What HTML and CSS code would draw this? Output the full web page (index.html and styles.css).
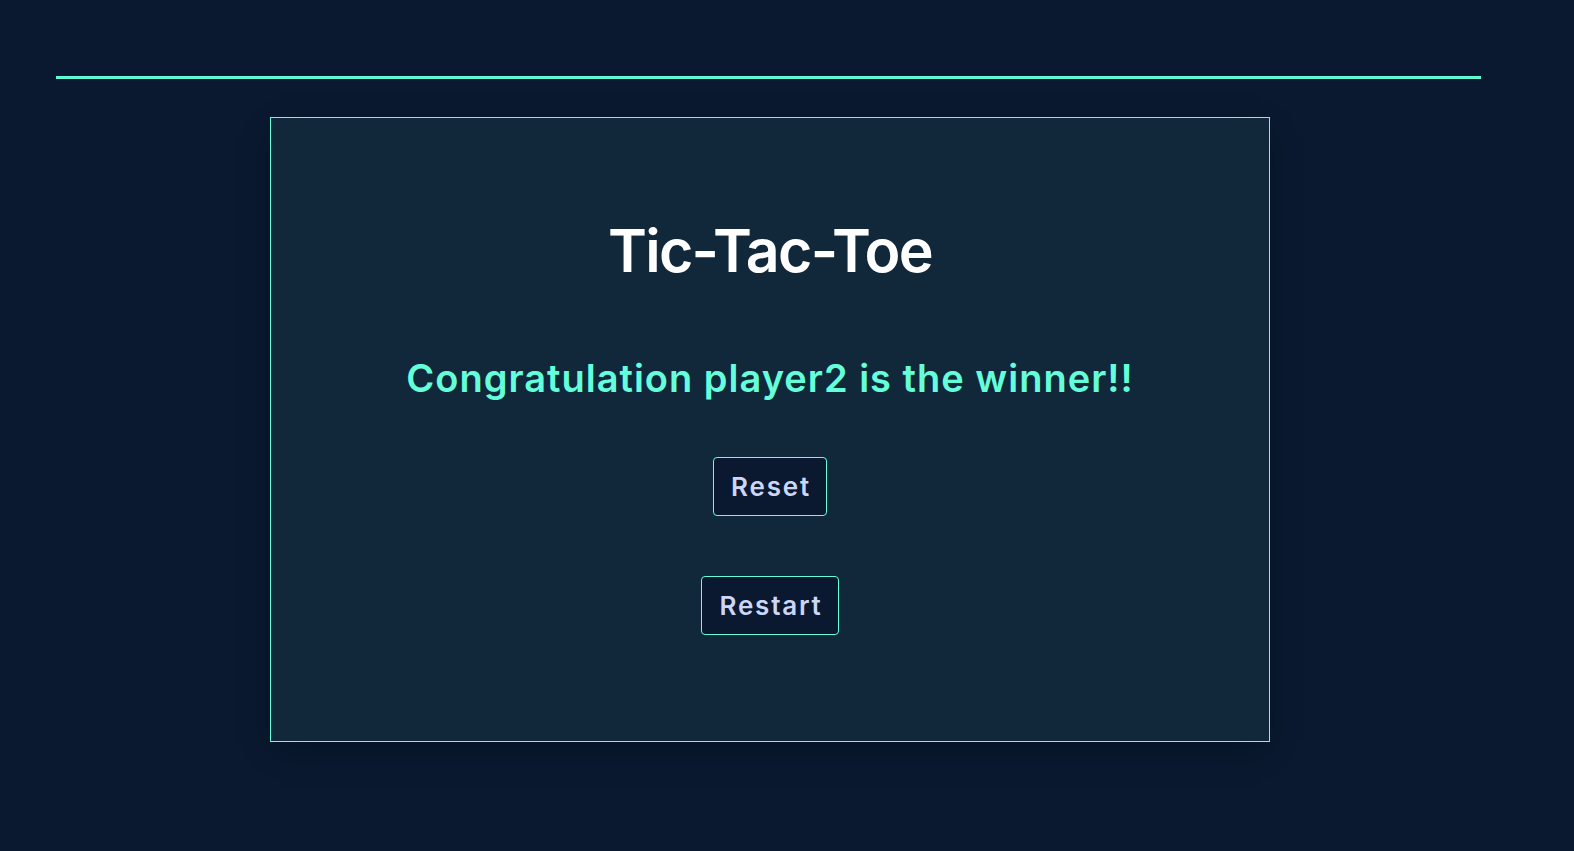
FILE: index.html
```html
<!DOCTYPE html>
<html lang="en">
<head>
<meta charset="utf-8">
<title>Tic-Tac-Toe</title>
<link rel="stylesheet" href="styles.css">
</head>
<body>
<div class="page">
  <div class="rule"></div>
  <main class="card">
    <h1 class="title">Tic-Tac-Toe</h1>
    <p class="message">Congratulation player2 is the winner!!</p>
    <button class="btn btn-reset" type="button">Reset</button>
    <button class="btn btn-restart" type="button">Restart</button>
  </main>
</div>
</body>
</html>
```

FILE: styles.css
```css
html, body {
  margin: 0;
  padding: 0;
  background: #0a192f;
}
body {
  font-family: Inter, "DejaVu Sans", sans-serif;
  min-height: 851px;
}
.page {
  width: 1428px;
  padding: 76px 0 0 56px;
}
.rule {
  width: 1425px;
  height: 3px;
  box-sizing: border-box;
  background: #5cf2cc;
  border: 1px solid #64ffda;
}
.card {
  box-sizing: border-box;
  width: 1000px;
  height: 625px;
  margin: 38px auto 0;
  background: #11283b;
  border: 1px solid #64ffda;
  box-shadow: 0 10px 30px -10px rgba(2, 12, 27, 0.7);
  display: flex;
  flex-direction: column;
  align-items: center;
}
.title {
  margin: 97px 0 0;
  font-size: 59px;
  line-height: 72px;
  font-weight: 600;
  letter-spacing: -1.7px;
  color: #ffffff;
}
.message {
  margin: 68px 0 0;
  font-size: 38px;
  line-height: 46px;
  font-weight: 600;
  letter-spacing: 1px;
  color: #64ffda;
}
.btn {
  font-family: inherit;
  font-size: 26px;
  font-weight: 600;
  letter-spacing: 1.8px;
  color: #ccd6f6;
  background: #0a192f;
  border: 1px solid #64ffda;
  border-radius: 4px;
  height: 59px;
  padding: 0 15px 0 17px;
  cursor: pointer;
}
.btn-reset {
  margin-top: 56px;
}
.btn-restart {
  margin-top: 60px;
}
```
